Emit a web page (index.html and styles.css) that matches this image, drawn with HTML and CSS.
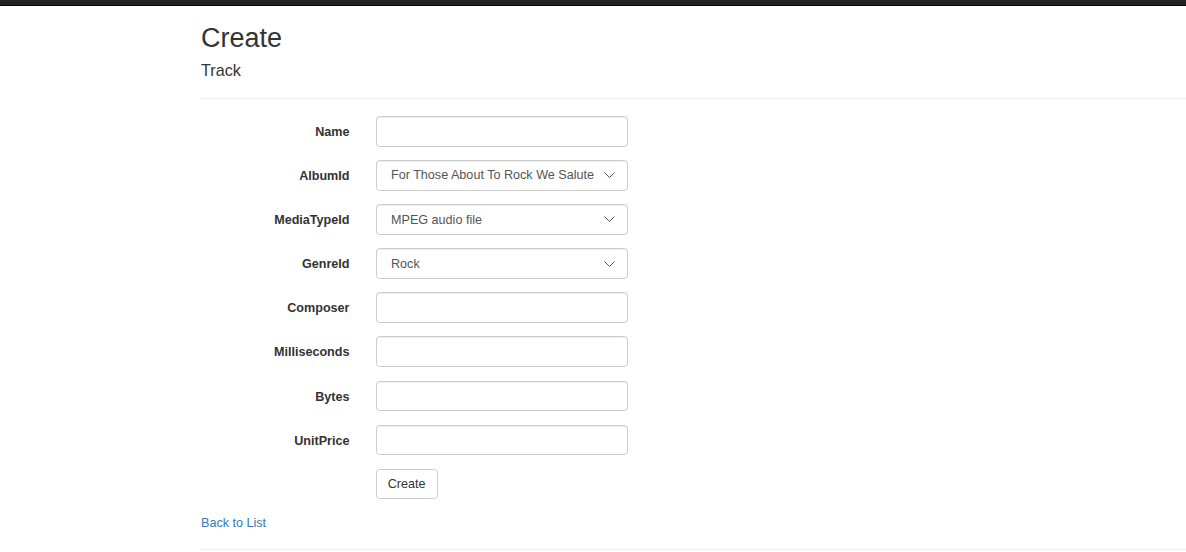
FILE: index.html
```html
<!DOCTYPE html>
<html>
<head>
<meta charset="utf-8">
<title>Create</title>
<link rel="stylesheet" href="styles.css">
</head>
<body>
<div class="navbar"></div>
<div class="container">
  <h2 class="page-title">Create</h2>
  <form class="form-horizontal">
    <h4 class="subtitle">Track</h4>
    <hr class="rule">
    <div class="form-group">
      <label class="control-label">Name</label>
      <div class="field"><input class="form-control" type="text"></div>
    </div>
    <div class="form-group">
      <label class="control-label">AlbumId</label>
      <div class="field"><select class="form-control select"><option>For Those About To Rock We Salute You</option></select></div>
    </div>
    <div class="form-group">
      <label class="control-label">MediaTypeId</label>
      <div class="field"><select class="form-control select"><option>MPEG audio file</option></select></div>
    </div>
    <div class="form-group">
      <label class="control-label">GenreId</label>
      <div class="field"><select class="form-control select"><option>Rock</option></select></div>
    </div>
    <div class="form-group">
      <label class="control-label">Composer</label>
      <div class="field"><input class="form-control" type="text"></div>
    </div>
    <div class="form-group">
      <label class="control-label">Milliseconds</label>
      <div class="field"><input class="form-control" type="text"></div>
    </div>
    <div class="form-group">
      <label class="control-label">Bytes</label>
      <div class="field"><input class="form-control" type="text"></div>
    </div>
    <div class="form-group">
      <label class="control-label">UnitPrice</label>
      <div class="field"><input class="form-control" type="text"></div>
    </div>
    <div class="form-group">
      <div class="control-label"></div>
      <div class="field"><button type="button" class="btn">Create</button></div>
    </div>
  </form>
  <div class="back"><a href="#" class="link">Back to List</a></div>
  <hr class="rule footer-rule">
</div>
</body>
</html>
```

FILE: styles.css
```css
html, body {
  margin: 0;
  padding: 0;
  overflow-x: hidden;
}
body {
  font-family: "Liberation Sans", Arial, Helvetica, sans-serif;
  font-size: 12.6px;
  line-height: 18px;
  color: #333;
  background: #fff;
}
.navbar {
  height: 5px;
  background: #222;
  border-bottom: 1px solid #080808;
}
.container {
  padding-left: 201px;
}
.page-title {
  font-size: 27px;
  font-weight: 500;
  line-height: 1.1;
  margin: 18px 0 8px;
}
.form-horizontal {
  margin: 0;
}
.subtitle {
  font-size: 16.2px;
  font-weight: 500;
  line-height: 1.1;
  margin: 8px 0 9px;
}
.rule {
  border: 0;
  border-top: 1px solid #eee;
  margin: 18px 0 17.5px;
  height: 0;
}
.form-group {
  display: flex;
  margin-bottom: 13.5px;
}
.control-label {
  width: 162px;
  flex: none;
  box-sizing: border-box;
  padding-right: 13.5px;
  padding-top: 7px;
  text-align: right;
  font-weight: bold;
  line-height: 18px;
}
.field {
  padding-left: 12.5px;
}
.form-control {
  display: block;
  box-sizing: border-box;
  width: 252px;
  height: 30.6px;
  padding: 5.4px 10.8px;
  font-family: inherit;
  font-size: 12.6px;
  line-height: 18px;
  color: #555;
  background: #fff;
  border: 1px solid #ccc;
  border-radius: 3.6px;
  box-shadow: inset 0 1px 1px rgba(0,0,0,.075);
  margin: 0;
  outline: none;
}
.select {
  -webkit-appearance: none;
  appearance: none;
  padding-left: 14.5px;
  padding-right: 30px;
  background-image: url("data:image/svg+xml;utf8,<svg xmlns='http://www.w3.org/2000/svg' width='11' height='6' viewBox='0 0 11 6'><path d='M0.5 0.5 L5.5 5.5 L10.5 0.5' fill='none' stroke='%23555' stroke-width='1'/></svg>");
  background-repeat: no-repeat;
  background-position: right 12px center;
  background-size: 11px 6px;
  text-overflow: clip;
  white-space: nowrap;
}
.btn {
  display: inline-block;
  box-sizing: border-box;
  height: 30.6px;
  padding: 5.4px 11.2px;
  font-family: inherit;
  font-size: 12.6px;
  line-height: 18px;
  color: #333;
  background: #fff;
  border: 1px solid #ccc;
  border-radius: 3.6px;
  cursor: pointer;
  margin: 0;
}
.back {
  line-height: 18px;
  padding-top: 1px;
}
.link {
  color: #337ab7;
  text-decoration: none;
}
.footer-rule {
  margin-top: 17px;
}
```
